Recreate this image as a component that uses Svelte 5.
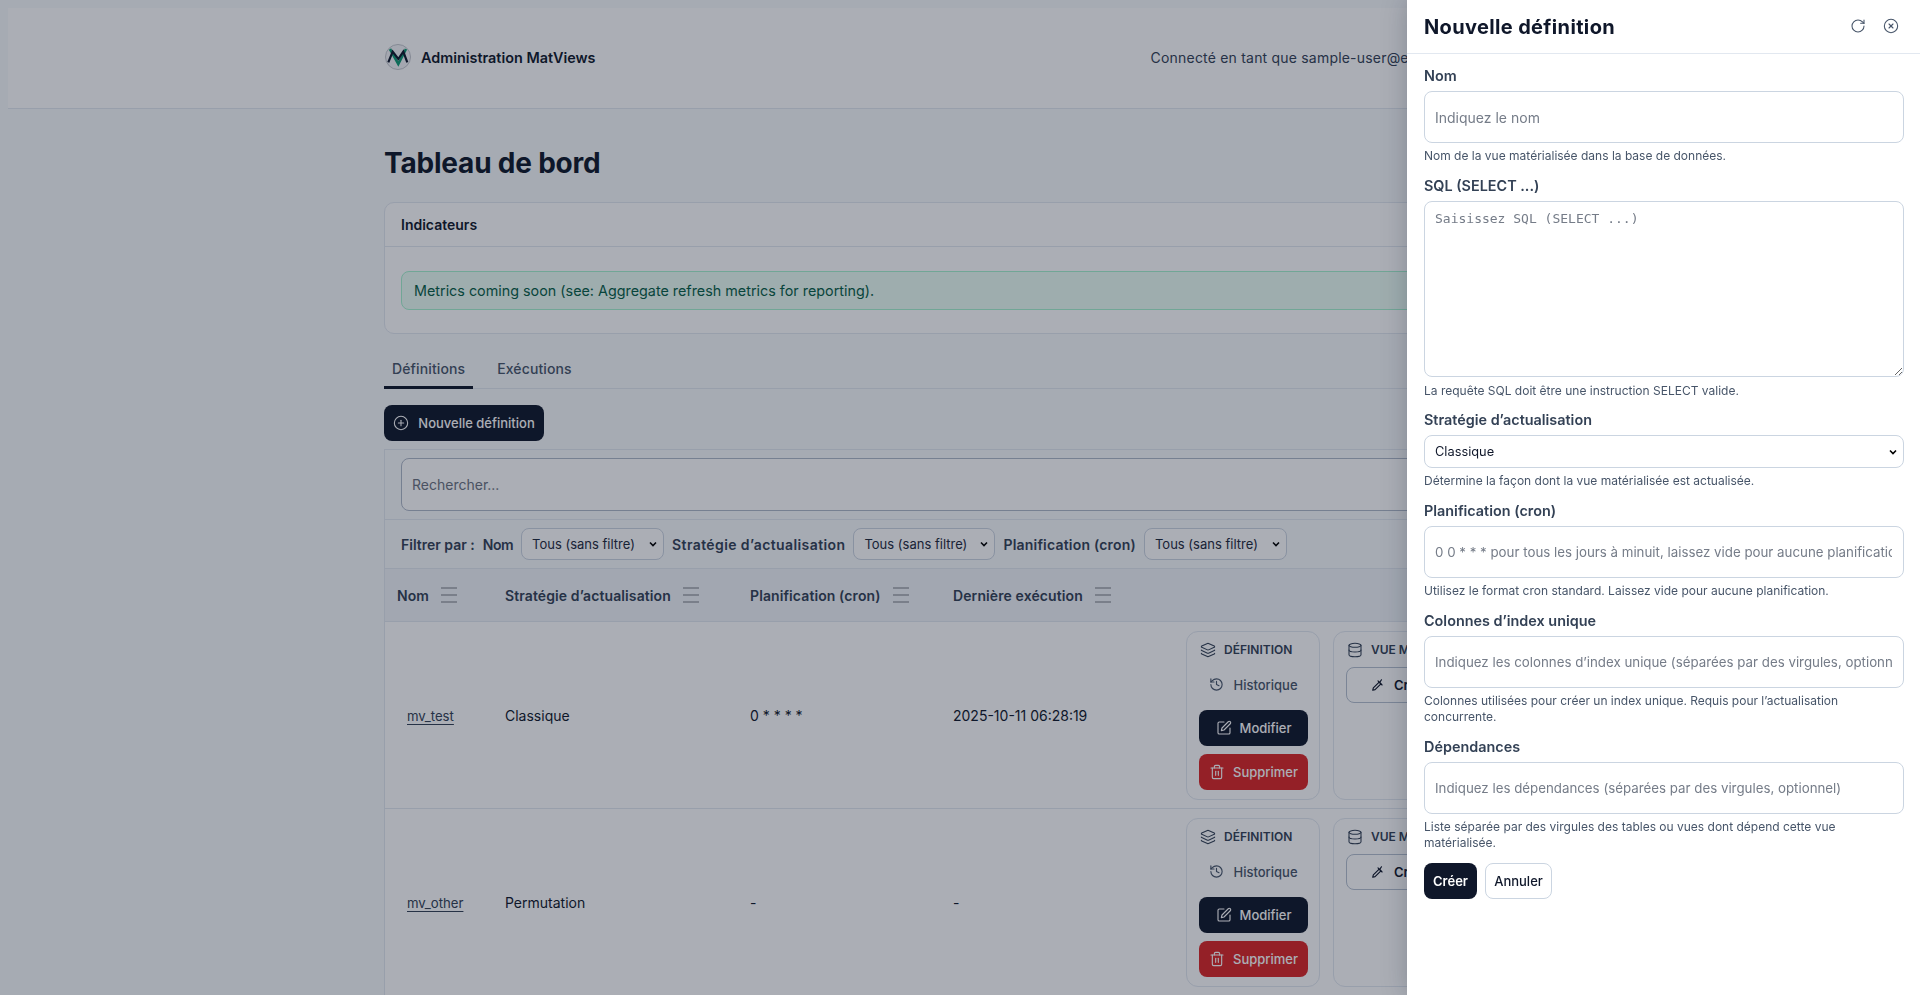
<script>
  const rows = [
    { name: 'mv_test', strat: 'Classique', cron: '0 * * * *', last: '2025-10-11 06:28:19' },
    { name: 'mv_other', strat: 'Permutation', cron: '-', last: '-' }
  ];
  const cols = [
    { label: 'Nom', cls: 'c1' },
    { label: 'Stratégie d’actualisation', cls: 'c2' },
    { label: 'Planification (cron)', cls: 'c3' },
    { label: 'Dernière exécution', cls: 'c4' }
  ];
</script>

{#snippet ico(d, size = 16, sw = 2)}
  <svg class="ico" width={size} height={size} viewBox="0 0 24 24" fill="none" stroke="currentColor" stroke-width={sw} stroke-linecap="round" stroke-linejoin="round">
    {#each d as p}<path d={p} />{/each}
  </svg>
{/snippet}

<div class="page">
  <header class="top">
    <div class="top-in">
      <div class="brand">
        <svg class="logo" width="26" height="26" viewBox="0 0 26 26">
          <circle cx="13" cy="13" r="12.5" fill="#f4f5f7" stroke="#c3c6cc" stroke-width="1" />
          <path d="M5 5 L13.3 20 L21 5" fill="none" stroke="#0f9a74" stroke-width="2.6" />
          <path d="M3.3 18.3 L7.7 7.7 L13.3 15 L18.3 7.7 L22.3 18.3" fill="none" stroke="#0f172a" stroke-width="2.2" />
        </svg>
        <span>Administration MatViews</span>
      </div>
      <div class="user">Connecté en tant que sample-user@example.com</div>
    </div>
  </header>

  <main class="wrap">
    <h1>Tableau de bord</h1>

    <section class="card">
      <div class="card-h">Indicateurs</div>
      <div class="card-b"><div class="alert">Metrics coming soon (see: Aggregate refresh metrics for reporting).</div></div>
    </section>

    <nav class="tabs">
      <span class="tab on">Définitions</span>
      <span class="tab">Exécutions</span>
    </nav>

    <button class="btn dark new">
      {@render ico(['M12 2a10 10 0 1 0 0 20a10 10 0 1 0 0-20', 'M8 12h8', 'M12 8v8'], 16, 1.6)}
      Nouvelle définition
    </button>

    <div class="panel">
      <div class="p-search"><input class="search" placeholder="Rechercher..." /></div>
      <div class="p-filter">
        <span class="fp">Filtrer par :</span>
        <span class="fl fl1">Nom</span>
        <select class="fs"><option>Tous (sans filtre)</option></select>
        <span class="fl fl2">Stratégie d’actualisation</span>
        <select class="fs"><option>Tous (sans filtre)</option></select>
        <span class="fl fl3">Planification (cron)</span>
        <select class="fs"><option>Tous (sans filtre)</option></select>
      </div>
      <div class="t-head">
        {#each cols as c}
          <div class="th {c.cls}"><span>{c.label}</span><i class="menu"><b></b><b></b><b></b></i></div>
        {/each}
      </div>
      {#each rows as r}
        <div class="t-row">
          <div class="td c1"><a href="#top">{r.name}</a></div>
          <div class="td c2">{r.strat}</div>
          <div class="td c3">{r.cron}</div>
          <div class="td c4">{r.last}</div>
          <div class="acts">
            <div class="act a1">
              <div class="act-h">
                {@render ico(['M12.8 2.2a2 2 0 0 0-1.6 0L2.6 6.1a1 1 0 0 0 0 1.8l8.6 3.9a2 2 0 0 0 1.6 0l8.6-3.9a1 1 0 0 0 0-1.8z', 'M2 12a1 1 0 0 0 .6.9l8.6 3.9a2 2 0 0 0 1.6 0l8.6-3.9A1 1 0 0 0 22 12', 'M2 17a1 1 0 0 0 .6.9l8.6 3.9a2 2 0 0 0 1.6 0l8.6-3.9A1 1 0 0 0 22 17'], 16, 1.6)}
                <span>Définition</span>
              </div>
              <div class="hist">
                {@render ico(['M3 12a9 9 0 1 0 9-9 9.75 9.75 0 0 0-6.74 2.74L3 8', 'M3 3v5h5', 'M12 7v5l4 2'], 15, 1.8)}
                Historique
              </div>
              <button class="btn dark abtn">
                {@render ico(['M12 3H5a2 2 0 0 0-2 2v14a2 2 0 0 0 2 2h14a2 2 0 0 0 2-2v-7', 'M18.4 2.6a2.1 2.1 0 1 1 3 3L12 15l-4 1 1-4z'], 16, 1.7)}
                Modifier
              </button>
              <button class="btn red abtn">
                {@render ico(['M3 6h18', 'M19 6v14a2 2 0 0 1-2 2H7a2 2 0 0 1-2-2V6', 'M8 6V4a2 2 0 0 1 2-2h4a2 2 0 0 1 2 2v2', 'M10 11v6', 'M14 11v6'], 16, 1.7)}
                Supprimer
              </button>
            </div>
            <div class="act a2">
              <div class="act-h">
                {@render ico(['M3 5a9 3 0 1 0 18 0a9 3 0 1 0-18 0', 'M3 5v14a9 3 0 0 0 18 0V5', 'M3 12a9 3 0 0 0 18 0'], 16, 1.6)}
                <span>Vue matérialisée</span>
              </div>
              <button class="btn ghost abtn">
                {@render ico(['M3 21l1-4 10-10 3 3-10 10z', 'M12 5l7 7', 'M15.5 6.5L18 3'], 14, 2)}
                Créer
              </button>
            </div>
          </div>
        </div>
      {/each}
    </div>
  </main>
</div>

<div class="overlay"></div>

<aside class="drawer">
  <div class="d-head">
    <h2>Nouvelle définition</h2>
    <div class="d-icons">
      {@render ico(['M21 12a9 9 0 1 1-9-9c2.52 0 4.93 1 6.74 2.74L21 8', 'M21 3v5h-5'], 16, 1.6)}
      {@render ico(['M12 2a10 10 0 1 0 0 20a10 10 0 1 0 0-20', 'm15 9-6 6', 'm9 9 6 6'], 16, 1.6)}
    </div>
  </div>
  <form class="form">
    <div class="f">
      <label for="n">Nom</label>
      <input id="n" class="in" placeholder="Indiquez le nom" />
      <small>Nom de la vue matérialisée dans la base de données.</small>
    </div>
    <div class="f f-sql">
      <label for="s">SQL (SELECT ...)</label>
      <textarea id="s" class="in ta" placeholder="Saisissez SQL (SELECT ...)"></textarea>
      <small>La requête SQL doit être une instruction SELECT valide.</small>
    </div>
    <div class="f">
      <label for="st">Stratégie d’actualisation</label>
      <select id="st" class="sel"><option>Classique</option></select>
      <small>Détermine la façon dont la vue matérialisée est actualisée.</small>
    </div>
    <div class="f">
      <label for="c">Planification (cron)</label>
      <input id="c" class="in long" placeholder="0 0 * * * pour tous les jours à minuit, laissez vide pour aucune planification" />
      <small>Utilisez le format cron standard. Laissez vide pour aucune planification.</small>
    </div>
    <div class="f">
      <label for="u">Colonnes d’index unique</label>
      <input id="u" class="in long" placeholder="Indiquez les colonnes d’index unique (séparées par des virgules, optionnel)" />
      <small>Colonnes utilisées pour créer un index unique. Requis pour l’actualisation concurrente.</small>
    </div>
    <div class="f">
      <label for="d">Dépendances</label>
      <input id="d" class="in long" placeholder="Indiquez les dépendances (séparées par des virgules, optionnel)" />
      <small>Liste séparée par des virgules des tables ou vues dont dépend cette vue matérialisée.</small>
    </div>
    <div class="f-btns">
      <button type="button" class="btn dark fb">Créer</button>
      <button type="button" class="btn ghost fb">Annuler</button>
    </div>
  </form>
</aside>

<style>
  :global(html), :global(body) { margin: 0; height: 995px; overflow: hidden; background: #fafafa; }
  :global(body) { font-family: Inter, "Liberation Sans", sans-serif; font-size: 14px; color: #0f172a; }
  * { box-sizing: border-box; }
  .ico { flex: none; display: block; }

  .page { height: 995px; padding: 8px 8px 0; overflow: hidden; background: #f8fafc; }
  .top { height: 101px; background: #ffffff; border-bottom: 1px solid #e2e8f0; }
  .top-in { width: 1152px; margin: 0 auto; height: 100px; display: flex; align-items: center; justify-content: space-between; padding-bottom: 2px; }
  .brand { display: flex; align-items: center; gap: 10px; font-weight: 600; font-size: 14.4px; padding-left: 1px; }
  .user { font-size: 14px; color: #334155; margin-right: 45px; letter-spacing: .2px; }

  .wrap { width: 1152px; margin: 0 auto; }
  h1 { margin: 37px 0 0; font-size: 28px; line-height: 34px; font-weight: 700; letter-spacing: -.2px; height: 56px; }

  .card { height: 132px; background: #fff; border: 1px solid #e2e8f0; border-radius: 10px; }
  .card-h { height: 44px; border-bottom: 1px solid #e2e8f0; padding: 0 16px; display: flex; align-items: center; font-weight: 600; font-size: 14px; }
  .card-b { padding: 24px 16px; }
  .alert { height: 39px; background: #ecfdf5; border: 1px solid #a7f3d0; border-radius: 8px; padding: 0 12px; display: flex; align-items: center; font-size: 14.35px; color: #065f46; width: 1300px; }

  .tabs { margin-top: 20px; height: 35px; border-bottom: 1px solid #e2e8f0; display: flex; }
  .tab { height: 35px; padding: 0 8px 6px; margin-right: 16px; display: flex; align-items: center; font-size: 14px; color: #475569; font-weight: 500; letter-spacing: .12px; }
  .tab.on { border-bottom: 3px solid #0f172a; padding-bottom: 3px; }

  .btn { border: 0; border-radius: 8px; font: inherit; font-weight: 500; display: flex; align-items: center; justify-content: center; }
  .dark { background: #0f172a; color: #fff; }
  .red { background: #dc2626; color: #fff; }
  .ghost { background: #fff; border: 1px solid #cbd5e1; color: #0f172a; }
  .new { margin-top: 16px; width: 160px; height: 36px; gap: 9px; font-size: 13px; }

  .panel { margin-top: 8px; width: 1152px; border-left: 1px solid #e2e8f0; border-top: 1px solid #e2e8f0; background: #f8fafc; }
  .p-search { height: 70px; padding: 8px 16px 0; border-bottom: 1px solid #e2e8f0; }
  .search { width: 1200px; height: 53px; border: 1px solid #aeb8c8; border-radius: 8px; padding: 0 10px; background: #fff; font: inherit; outline: none; }
  .search::placeholder { color: #6b7280; }
  .p-filter { height: 49px; padding: 0 16px; border-bottom: 1px solid #e2e8f0; display: flex; align-items: center; gap: 8px; }
  .fp { font-weight: 600; font-size: 14px; color: #334155; }
  .fl { font-weight: 600; font-size: 14px; color: #334155; }
  .fl1 { letter-spacing: -.5px; }
  .fl2 { letter-spacing: .4px; }
  .fl3 { letter-spacing: .2px; }
  .fs, .sel {
    appearance: none; -webkit-appearance: none;
    background-color: #fff;
    background-image: url("data:image/svg+xml,%3Csvg xmlns='http://www.w3.org/2000/svg' viewBox='0 0 10 10'%3E%3Cpath d='M2 3.5l3 3 3-3' fill='none' stroke='%23000' stroke-width='1.6'/%3E%3C/svg%3E");
    background-repeat: no-repeat; background-size: 10px 10px;
    border: 1px solid #cbd5e1; border-radius: 8px; padding: 0 10px; font: inherit;
  }
  .fs { width: 142px; height: 32px; font-size: 13px; color: #1e293b; background-position: right 5px center; }
  .fs:nth-of-type(1) { width: 143px; }
  .fs:nth-of-type(3) { width: 143px; }

  .t-head { height: 53px; display: flex; align-items: center; border-bottom: 1px solid #e2e8f0; background: #f1f5f9; }
  .th { display: flex; align-items: center; gap: 12px; font-weight: 600; font-size: 14px; color: #334155; padding-left: 12px; letter-spacing: .1px; }
  .c1 { width: 108px; flex: none; }
  .c2 { width: 245px; flex: none; }
  .c3 { width: 203px; flex: none; }
  .c4 { width: 233px; flex: none; }
  .th.c1 { letter-spacing: 0; }
  .menu { display: flex; flex-direction: column; gap: 4.6px; width: 16px; }
  .menu b { display: block; height: 2px; background: #b4b7bd; }

  .t-row { height: 187px; display: flex; align-items: center; background: #fff; border-bottom: 1px solid #e2e8f0; }
  .td { padding-left: 12px; }
  .td.c1 { padding-left: 22px; }
  .td a { color: #334155; text-decoration: underline; text-underline-offset: 2.5px; font-size: 13.2px; }
  .acts { display: flex; gap: 13px; margin-left: 12px; }
  .act { width: 134px; height: 169px; border: 1px solid #e2e8f0; border-radius: 12px; padding: 8px 11px 8px 12px; display: flex; flex-direction: column; }
  .a2 { width: 200px; }
  .act-h { display: flex; align-items: center; gap: 8px; height: 20px; padding-left: 1px; font-size: 12px; font-weight: 600; text-transform: uppercase; color: #334155; }
  .hist { height: 36px; margin-top: 7px; display: flex; align-items: center; justify-content: center; gap: 9px; font-weight: 500; font-size: 13px; color: #475569; }
  .abtn { height: 36px; margin-top: 8px; gap: 8px; font-size: 13px; font-weight: 500; }
  .hist + .abtn { margin-top: 7px; }
  .a2 .abtn { justify-content: flex-start; padding-left: 24px; margin-top: 7px; gap: 9px; border-color: #b6c1d0; font-weight: 600; }

  .overlay { position: fixed; inset: 0; background: rgba(15, 23, 42, .35); }

  .drawer { position: fixed; top: 0; right: 0; bottom: 0; width: 513px; background: #fff; box-shadow: 0 0 24px rgba(15, 23, 42, .25); }
  .d-head { height: 54px; border-bottom: 1px solid #e2e8f0; padding: 0 16px 0 17px; display: flex; align-items: center; justify-content: space-between; }
  h2 { margin: 0; font-size: 20px; font-weight: 700; letter-spacing: .35px; }
  .d-icons { display: flex; gap: 17px; color: #475569; margin-right: 5px; margin-top: -2px; }
  .form { padding: 13px 16px 0 17px; display: flex; flex-direction: column; width: 497px; }
  .f { display: flex; flex-direction: column; margin-bottom: 13px; }
  .f-sql small { margin-top: 6px; }
  .f-sql { margin-bottom: 12px; }
  label { font-weight: 600; font-size: 14.4px; line-height: 18px; height: 18px; color: #334155; margin-bottom: 6px; }
  .in { width: 480px; height: 52px; border: 1px solid #cbd5e1; border-radius: 8px; padding: 0 11px 0 10px; background: #fff; font: inherit; font-size: 14px; outline: none; }
  .in::placeholder { color: #757c88; }
  .long { font-size: 13.3px; }
  .ta { height: 176px; padding: 9px 10px; resize: vertical; font-family: "DejaVu Sans Mono", monospace; font-size: 13px; display: block; }
  .sel { width: 480px; height: 33px; font-size: 12.8px; color: #0f172a; background-position: right 5px center; }
  small { font-size: 12px; line-height: 16px; color: #475569; margin-top: 5px; }
  .f-btns { display: flex; gap: 8px; margin-top: -1px; }
  .fb { height: 36px; font-size: 13px; font-weight: 600; }
  .fb.dark { width: 53px; }
  .fb.ghost { width: 67px; font-weight: 500; }
</style>
